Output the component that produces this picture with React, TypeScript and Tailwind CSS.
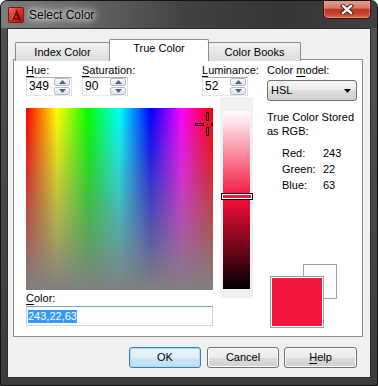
import React from 'react';

const ui = "font-['Liberation_Sans',Arial,sans-serif] text-[11px] text-black";

function U({ children }: { children: React.ReactNode }) {
  return <span className="underline decoration-1 underline-offset-[2px]">{children}</span>;
}

function AcadIcon() {
  return (
    <svg width="16" height="16" viewBox="0 0 16 16" className="ml-[7px] mt-[6px] shrink-0">
      <defs>
        <linearGradient id="acad" x1="0" y1="0" x2="1" y2="1">
          <stop offset="0" stopColor="#f57a66" />
          <stop offset="0.5" stopColor="#de2a1e" />
          <stop offset="1" stopColor="#b3100c" />
        </linearGradient>
      </defs>
      <rect x="0.5" y="0.5" width="15" height="15" rx="1" fill="url(#acad)" stroke="#7d1410" />
      <path d="M2.5 13.5 L7.6 2.5 L8.6 2.5 L13.5 13.5 L10.9 13.5 L8.1 7.2 L5.2 13.5 Z" fill="#6a0806" />
      <path d="M6.2 11 L10 11 L10.6 12.3 L5.6 12.3 Z" fill="#6a0806" />
      <path d="M3.4 13 L7.6 3.4" stroke="#ffb0a0" strokeWidth="0.8" />
    </svg>
  );
}

function CloseButton() {
  return (
    <div className="-mt-px ml-auto mr-[6px] flex h-[19px] w-[48px] shrink-0 items-center justify-center rounded-b-[5px] border border-t-0 border-[#3b100a] bg-[linear-gradient(to_bottom,#e4a395_0%,#d67a68_45%,#bf3520_52%,#c4402a_75%,#da6a4c_100%)] shadow-[inset_0_0_0_1px_rgba(255,220,210,0.35)]">
      <svg width="14" height="11" viewBox="0 0 14 11">
        <path d="M3 2 L11 9 M11 2 L3 9" stroke="#3a1410" strokeWidth="4.2" strokeLinecap="square" />
        <path d="M3 2 L11 9 M11 2 L3 9" stroke="#ffffff" strokeWidth="2.4" strokeLinecap="square" />
      </svg>
    </div>
  );
}

function SpinBtn({ up }: { up?: boolean }) {
  return (
    <div className="flex h-[8px] items-center justify-center rounded-[2px] border border-[#b9bcc2] bg-[linear-gradient(to_bottom,#fafafa,#e2e3e6)]">
      <svg width="7" height="4" viewBox="0 0 7 4">
        <path d={up ? 'M0 4 L3.5 0 L7 4 Z' : 'M0 0 L3.5 4 L7 0 Z'} fill="#4d6185" />
      </svg>
    </div>
  );
}

function SpinBox({ value }: { value: string }) {
  return (
    <div className="flex h-[19px] w-[46px] border border-[#abadb3] border-x-[#dbdfe6] border-b-[#e3e9ef] bg-white">
      <div className="flex-1 pl-[2px] text-[12px] leading-[17px]">{value}</div>
      <div className="mr-px flex w-[16px] flex-col gap-px">
        <SpinBtn up />
        <SpinBtn />
      </div>
    </div>
  );
}

function Crosshair() {
  return (
    <svg width="187" height="182" className="absolute left-0 top-0" viewBox="0 0 187 182">
      <g fill="none" stroke="#000" strokeWidth="1">
        <rect x="180.5" y="4.5" width="2" height="8" />
        <rect x="180.5" y="19.5" width="2" height="8" />
        <rect x="169.5" y="15.5" width="8" height="2" />
        <rect x="185.5" y="15.5" width="8" height="2" />
      </g>
      <rect x="181" y="16" width="1" height="1" fill="#000" />
    </svg>
  );
}

function WinButton({ children, primary }: { children: React.ReactNode; primary?: boolean }) {
  return (
    <div
      className={
        'flex h-[21px] items-center justify-center rounded-[3px] border leading-[13px] ' +
        (primary
          ? 'border-[#3c7fb1] bg-[linear-gradient(to_bottom,#eaf5fc_0%,#e1eef8_50%,#cfe4f3_50%,#c2dcef_100%)] shadow-[inset_0_0_0_1px_#a9dcf6]'
          : 'border-[#707070] bg-[linear-gradient(to_bottom,#f2f2f2_0%,#ebebeb_50%,#dddddd_50%,#cfcfcf_100%)] shadow-[inset_0_0_0_1px_#fcfcfc]')
      }
    >
      {children}
    </div>
  );
}

export default function App() {
  return (
    <div className={`h-[386px] w-[378px] ${ui}`}>
      <div className="flex h-[386px] w-[378px] flex-col overflow-hidden rounded-t-[7px] border border-[#121212] bg-[linear-gradient(to_bottom,#525252,#454545_60%,#3c3c3c)]">
        {/* title bar */}
        <div className="flex h-[27px] shrink-0 items-start bg-[linear-gradient(to_right,#7c7c7c_0%,#646464_22%,#414141_50%,#363636_75%,#404040_100%)]">
          <AcadIcon />
          <div className="ml-[5px] mt-[7px] text-[12px] leading-[14px] [text-shadow:0_0_5px_#fff,0_0_9px_#fff,0_0_14px_rgba(255,255,255,0.9)]">
            Select Color
          </div>
          <CloseButton />
        </div>

        {/* client area */}
        <div className="ml-[6px] h-[350px] w-[364px] shrink-0 border border-[#2e2e2e] bg-[#f0f0f0]">
          {/* tabs */}
          <div className="flex h-[32px] items-end pl-[7px] pt-[11px]">
            <div className="flex h-[19px] w-[95px] items-center justify-center rounded-t-[2px] border border-b-0 border-[#898c95] bg-[linear-gradient(to_bottom,#f3f3f3,#e6e6e6_50%,#dcdcdc)] leading-[13px]">
              Index Color
            </div>
            <div className="relative z-10 -ml-px flex h-[22px] w-[100px] items-start justify-center rounded-t-[2px] border border-b-0 border-[#898c95] bg-white pt-[2px] leading-[13px]">
              True Color
            </div>
            <div className="-ml-px flex h-[19px] w-[93px] items-center justify-center rounded-t-[2px] border border-b-0 border-[#898c95] bg-[linear-gradient(to_bottom,#f3f3f3,#e6e6e6_50%,#dcdcdc)] leading-[13px]">
              Color Books
            </div>
          </div>

          {/* panel */}
          <div className="-mt-[2px] ml-[5px] flex h-[278px] w-[350px] border border-[#898c95] bg-white">
            {/* left part */}
            <div className="w-[253px] pl-[12px] pt-[4px]">
              <div className="flex">
                <div className="w-[46px]">
                  <div className="h-[13px] leading-[13px]">
                    <U>H</U>ue:
                  </div>
                  <SpinBox value="349" />
                </div>
                <div className="ml-[10px] w-[46px]">
                  <div className="h-[13px] whitespace-nowrap leading-[13px]">
                    <U>S</U>aturation:
                  </div>
                  <SpinBox value="90" />
                </div>
                <div className="ml-[74px] w-[46px]">
                  <div className="h-[13px] whitespace-nowrap leading-[13px]">
                    <U>L</U>uminance:
                  </div>
                  <SpinBox value="52" />
                </div>
              </div>

              <div className="mt-px flex items-start">
                <div className="w-[187px]">
                  <div className="relative mt-[11px] h-[182px] w-[187px] overflow-hidden bg-[linear-gradient(to_bottom,rgba(128,128,128,0),#808080),linear-gradient(to_right,#ff0000,#ffff00,#00ff00,#00ffff,#0000ff,#ff00ff,#ff0000)]">
                    <Crosshair />
                  </div>
                  <div className="mt-[2px] h-[13px] leading-[13px]">
                    <U>C</U>olor:
                  </div>
                  <div className="mt-px flex h-[20px] items-center border border-[#7f9fc2] border-x-[#b8cfe6] border-b-[#c9dcee] bg-white pl-px">
                    <span className="bg-[#3399ff] leading-[13px] text-white">243,22,63</span>
                  </div>
                </div>
                <div className="relative ml-[7px] h-[201px] w-[33px] bg-[#f1f1f1] pl-[3px] pt-[14px]">
                  <div className="h-[178px] w-[27px] bg-[linear-gradient(to_bottom,#ffffff,#f20d37_50%,#000000)]" />
                  <div className="absolute left-px top-[96px] h-[7px] w-[32px] border border-black">
                    <div className="h-full w-full border border-white bg-[#f3163f]" />
                  </div>
                </div>
              </div>
            </div>

            {/* right column */}
            <div className="w-[90px] pt-[4px]">
              <div className="h-[13px] whitespace-nowrap leading-[13px]">
                Color <U>m</U>odel:
              </div>
              <div className="mt-[3px] flex h-[21px] items-center justify-between rounded-[3px] border border-[#707070] bg-[linear-gradient(to_bottom,#f2f2f2_0%,#ebebeb_50%,#dddddd_50%,#cfcfcf_100%)] pl-[3px] pr-[5px] leading-[13px]">
                <span>HSL</span>
                <svg width="7" height="4" viewBox="0 0 7 4">
                  <path d="M0 0 L7 0 L3.5 4 Z" fill="#000" />
                </svg>
              </div>
              <div className="mt-[9px] whitespace-nowrap leading-[14px]">
                True Color Stored
                <br />
                as RGB:
              </div>
              <div className="mt-[7px] pl-[15px] leading-[16px]">
                <div className="flex">
                  <span className="w-[41px]">Red:</span>
                  <span>243</span>
                </div>
                <div className="flex">
                  <span className="w-[41px]">Green:</span>
                  <span>22</span>
                </div>
                <div className="flex">
                  <span className="w-[41px]">Blue:</span>
                  <span>63</span>
                </div>
              </div>
              <div className="relative ml-[3px] mt-[71px] h-[64px] w-[67px]">
                <div className="absolute left-[33px] top-0 h-[35px] w-[34px] border border-[#a0a0a0] bg-white" />
                <div className="absolute left-0 top-[12px] h-[52px] w-[54px] border border-[#a0a0a0] bg-white p-px">
                  <div className="h-full w-full bg-[#f3163f]" />
                </div>
              </div>
            </div>
          </div>

          {/* buttons */}
          <div className="mt-[10px] flex">
            <div className="ml-[121px] w-[72px]">
              <WinButton primary>OK</WinButton>
            </div>
            <div className="ml-[6px] w-[72px]">
              <WinButton>Cancel</WinButton>
            </div>
            <div className="ml-[5px] w-[73px]">
              <WinButton>
                <span>
                  <U>H</U>elp
                </span>
              </WinButton>
            </div>
          </div>
        </div>
      </div>
    </div>
  );
}
